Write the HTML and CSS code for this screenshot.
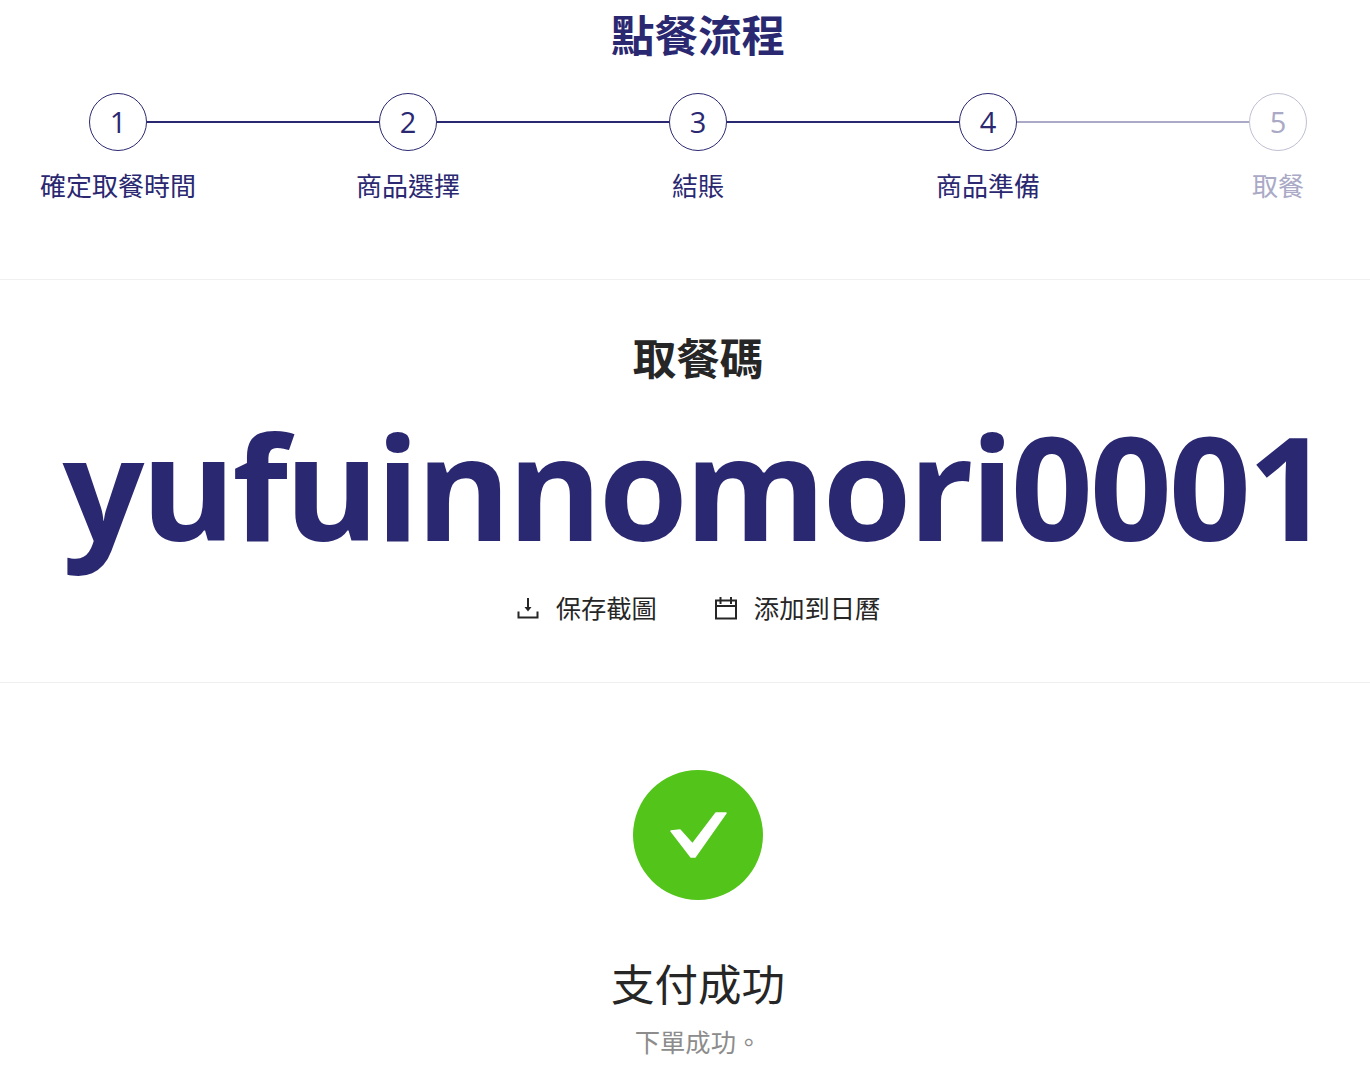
FILE: index.html
```html
<!DOCTYPE html>
<html lang="zh-Hant">
<head>
    <meta charset="UTF-8">
    <meta name="viewport" content="width=device-width, initial-scale=1.0">
    <title>點餐流程</title>
    <link rel="stylesheet" href="styles.css">
</head>
<body>
    <section class="progress-section">
        <h1 class="page-title">點餐流程</h1>
        <ol class="steps">
            <li class="step">
                <div class="step-head">
                    <span class="step-line step-line-none"></span>
                    <span class="step-circle">1</span>
                    <span class="step-line"></span>
                </div>
                <span class="step-label">確定取餐時間</span>
            </li>
            <li class="step">
                <div class="step-head">
                    <span class="step-line"></span>
                    <span class="step-circle">2</span>
                    <span class="step-line"></span>
                </div>
                <span class="step-label">商品選擇</span>
            </li>
            <li class="step">
                <div class="step-head">
                    <span class="step-line"></span>
                    <span class="step-circle">3</span>
                    <span class="step-line"></span>
                </div>
                <span class="step-label">結賬</span>
            </li>
            <li class="step">
                <div class="step-head">
                    <span class="step-line"></span>
                    <span class="step-circle">4</span>
                    <span class="step-line step-line-muted"></span>
                </div>
                <span class="step-label">商品準備</span>
            </li>
            <li class="step step-muted">
                <div class="step-head">
                    <span class="step-line step-line-muted"></span>
                    <span class="step-circle">5</span>
                    <span class="step-line step-line-none"></span>
                </div>
                <span class="step-label">取餐</span>
            </li>
        </ol>
    </section>

    <section class="code-section">
        <h2 class="code-title">取餐碼</h2>
        <p class="code-value">yufuinnomori0001</p>
        <div class="code-actions">
            <a class="code-action" href="#">
                <svg class="action-icon" viewBox="0 0 24 24" fill="none" stroke="currentColor" stroke-width="2">
                    <path d="M12 2v11"/>
                    <path d="M8.500 11h7L12 15.500z" fill="currentColor" stroke="none"/>
                    <path d="M2.500 15.500v6h19v-6"/>
                </svg>
                保存截圖
            </a>
            <a class="code-action" href="#">
                <svg class="action-icon" viewBox="0 0 24 24" fill="none" stroke="currentColor" stroke-width="2">
                    <path d="M2 4.500h20v18H2zM2 10h20M6.500 1v7M17 1v7"/>
                </svg>
                添加到日曆
            </a>
        </div>
    </section>

    <section class="result-section">
        <div class="result-icon">
            <svg viewBox="0 0 130 130" width="130" height="130">
                <path d="M38 61l9-1 12.500 14L83 43h10L62 87h-4z" fill="#fff" stroke="#fff" stroke-width="1.500" stroke-linejoin="round"/>
            </svg>
        </div>
        <h2 class="result-title">支付成功</h2>
        <p class="result-text">下單成功。</p>
    </section>
</body>
</html>
```

FILE: styles.css
```css
* {
    box-sizing: border-box;
}

html, body {
    overflow: hidden;
}

body {
    margin: 0;
    padding: 0;
    height: 1084px;
    background-color: #fff;
    font-family: "Open Sans", "Noto Sans CJK TC", sans-serif;
    color: #262626;
}

h1, h2, p, ol {
    margin: 0;
    padding: 0;
}

/* everything is centred on x=698, a bit right of the window centre */
section {
    padding-left: 26px;
    text-align: center;
}

.progress-section {
    height: 280px;
    padding-top: 7px;
    border-bottom: 1px solid #f0f0f0;
}

.page-title {
    font-size: 43.500px;
    line-height: 58px;
    font-weight: 700;
    color: #2a2871;
}

.steps {
    display: grid;
    grid-template-columns: repeat(5, 290px);
    margin-left: -53px;
    margin-top: 28px;
    list-style: none;
}

.step {
    color: #2a2871;
    font-size: 26px;
}

.step-head {
    display: flex;
    align-items: center;
}

.step-circle {
    flex: none;
    display: flex;
    align-items: center;
    justify-content: center;
    width: 58px;
    height: 58px;
    padding-bottom: 2px;
    border: 1px solid #2a2871;
    border-radius: 50%;
    font-size: 29px;
    font-weight: 400;
}

.step-line {
    flex: 1;
    height: 2px;
    background-color: #2a2871;
}

.step-line-muted {
    background-color: #aaa9c6;
}

.step-line-none {
    background-color: transparent;
}

.step-label {
    display: block;
    margin-top: 17px;
    line-height: 36px;
}

.step-muted {
    color: #aaa9c6;
}

.step-muted .step-circle {
    border-color: #bfbfd4;
}

.code-section {
    height: 403px;
    padding-top: 49px;
    border-bottom: 1px solid #f0f0f0;
}

.code-title {
    font-size: 43.500px;
    line-height: 60px;
    font-weight: 700;
}

.code-value {
    margin-top: 8px;
    margin-left: -7px;
    font-size: 144px;
    line-height: 176px;
    font-weight: 700;
    letter-spacing: -3.400px;
    color: #2a2871;
    white-space: nowrap;
}

.code-actions {
    display: flex;
    justify-content: center;
    gap: 57px;
    margin-top: 17px;
}

.code-action {
    display: flex;
    align-items: center;
    gap: 16px;
    font-size: 25.300px;
    line-height: 36px;
    color: #262626;
    text-decoration: none;
}

.action-icon {
    width: 24px;
    height: 24px;
}

.result-section {
    padding-top: 87px;
}

.result-icon {
    width: 130px;
    height: 130px;
    margin: 0 auto;
    border-radius: 50%;
    background-color: #52c41a;
}

.result-title {
    margin-top: 53px;
    font-size: 43.500px;
    line-height: 64px;
    font-weight: 400;
}

.result-text {
    margin-top: 7px;
    font-size: 25.300px;
    line-height: 36px;
    color: #8c8c8c;
}
```
